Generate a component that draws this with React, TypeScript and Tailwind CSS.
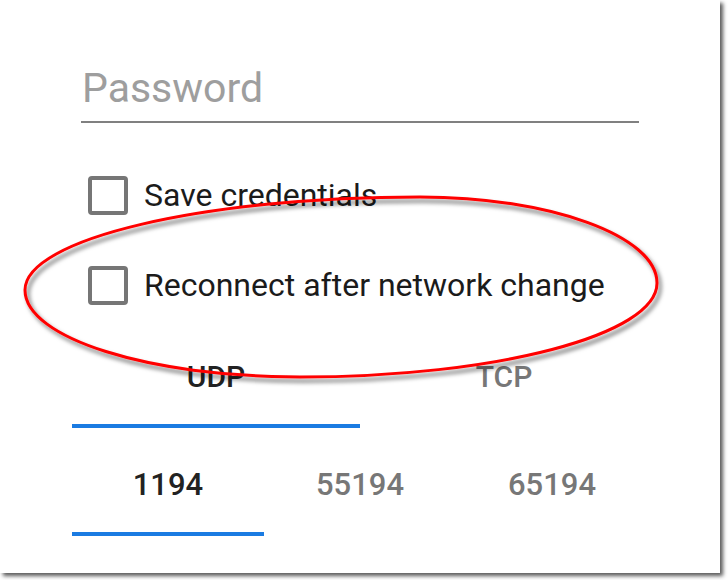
import React from "react";

function Checkbox() {
  return <div className="w-[40px] h-[39px] shrink-0 rounded-[4px] border-[4px] border-[#767676] bg-white" />;
}

export default function App() {
  return (
    <div className="w-[728px] h-[580px] bg-white" style={{ fontFamily: "Roboto, 'Noto Sans', sans-serif" }}>
      <div className="relative w-[720px] h-[573px] bg-white shadow-[3px_3px_4px_rgba(0,0,0,0.65)]">
        <div className="flex flex-col">
          <div className="mx-[81px] mt-[68px] h-[55px] border-b-2 border-[#808080]">
            <div className="text-[41px] leading-[41px] text-[#9e9e9e] pl-[1px]">Password</div>
          </div>

          <div className="ml-[88px] mt-[52px] flex items-center">
            <Checkbox />
            <span className="ml-[16px] text-[32px] leading-[40px] text-[#1b1b1b]">Save credentials</span>
          </div>
          <div className="ml-[88px] mt-[50px] flex items-center">
            <Checkbox />
            <span className="ml-[16px] text-[32px] leading-[40px] text-[#1b1b1b]">Reconnect after network change</span>
          </div>

          <div className="ml-[72px] w-[576px] mt-[57px] flex flex-col">
            <div className="grid grid-cols-2 text-[30px] leading-[30px] font-medium">
              <div className="text-center text-[#222222]">UDP</div>
              <div className="text-center text-[#777777]">TCP</div>
            </div>
            <div className="mt-[32px] h-[4px] w-[288px] bg-[#1a7be2]" />

            <div className="mt-[41px] grid grid-cols-3 text-[31px] leading-[31px] font-medium">
              <div className="text-center text-[#222222]">1194</div>
              <div className="text-center text-[#777777]">55194</div>
              <div className="text-center text-[#777777]">65194</div>
            </div>
            <div className="mt-[32px] h-[4px] w-[192px] bg-[#1a7be2]" />
          </div>
        </div>

        <svg className="absolute left-0 top-0 pointer-events-none" width="720" height="573" viewBox="0 0 720 573">
          <defs>
            <filter id="sh" x="-10%" y="-20%" width="120%" height="140%">
              <feDropShadow dx="3" dy="4" stdDeviation="2" floodColor="#000" floodOpacity="0.55" />
            </filter>
          </defs>
          <path
            d="M 25 290 C 25 239, 203 197, 420 197 C 550 197, 657 236, 657 283 C 657 335, 496 377, 300 377 C 149 377, 25 338, 25 290 Z"
            fill="none"
            stroke="#ff0000"
            strokeWidth="3"
            filter="url(#sh)"
          />
        </svg>
      </div>
    </div>
  );
}
